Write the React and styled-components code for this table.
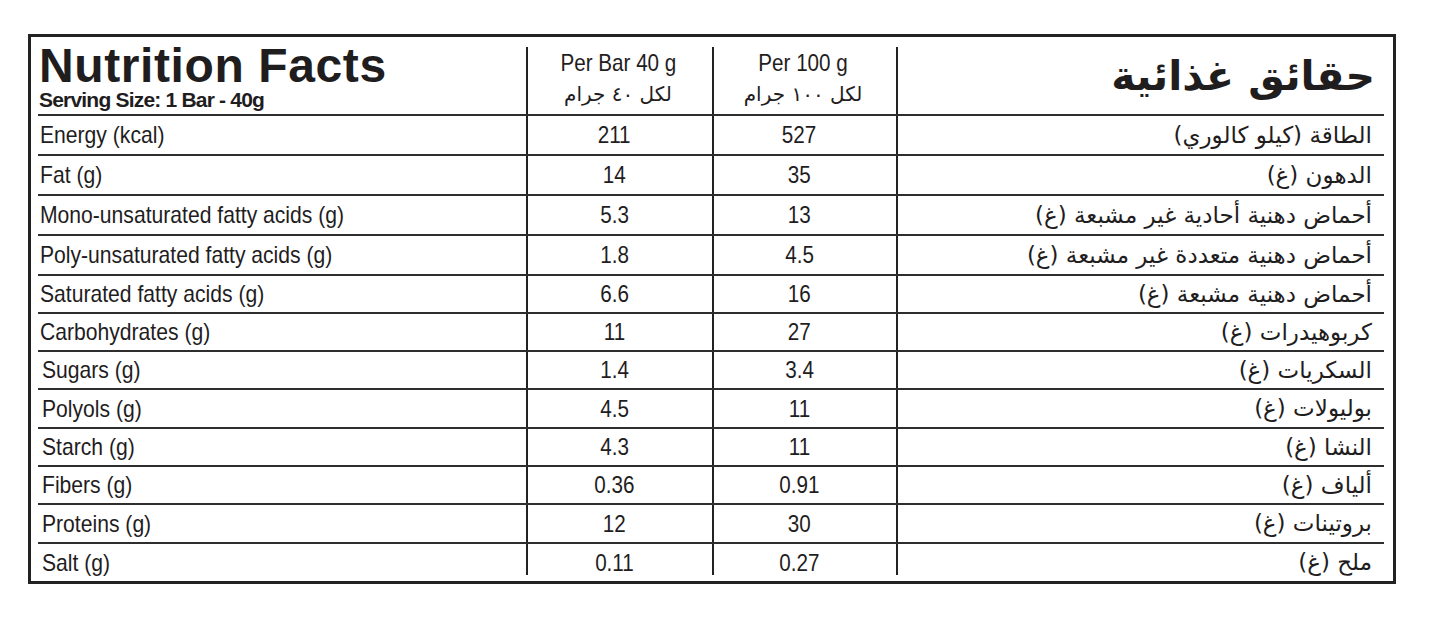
import React from 'react'
import styled, { createGlobalStyle } from 'styled-components';

const GlobalStyle = createGlobalStyle`
  body {
    margin: 0;
    background: #ffffff;
    color: #1f1d1e;
    font-family: "Liberation Sans", Arial, sans-serif;
  }
`

const Page = styled.div`
  padding: 34px 0 0 28px;
`

const Label = styled.div`
  width: 1368px;
  box-sizing: border-box;
  border: 3px solid #222;
  padding: 0 9px 0 7px;
`

const Row = styled.div`
  display: grid;
  grid-template-columns: 488px 186px 184px 1fr;
  height: ${({ $h }) => $h}px;
  border-bottom: ${({ $last }) => ($last ? 'none' : '2px solid #2e2e2e')};
`

const Cell = styled.div`
  display: flex;
  align-items: center;
  min-width: 0;
  border-left: ${({ $line }) => ($line ? '2px solid #222' : 'none')};
  margin-bottom: ${({ $last }) => ($last ? '6px' : '0')};
  padding-top: ${({ $last }) => ($last ? '6px' : '0')};
`

const LabelCell = styled(Cell)`
  padding-left: ${({ $indent }) => ($indent ? '4px' : '2px')};
`

const ValueCell = styled(Cell)`
  justify-content: center;
  padding-right: 11px;
`

/* rtl: flex-start sits on the right edge */
const ArabicCell = styled(Cell)`
  direction: rtl;
  justify-content: flex-start;
  padding-right: 12px;
`

const Narrow = styled.span`
  display: inline-block;
  font-size: 24px;
  line-height: 1;
  white-space: nowrap;
  transform: scaleX(${({ $sx }) => $sx});
  transform-origin: ${({ $origin }) => $origin};
`

const ArabicText = styled.span`
  font-family: "DejaVu Sans", sans-serif;
  font-size: ${({ $size }) => $size || 23}px;
  line-height: 1;
  white-space: nowrap;
`

const TitleBlock = styled.div`
  padding: 6px 0 0 1px;
`

const Title = styled.h1`
  margin: 0;
  font-size: 48px;
  line-height: 46px;
  font-weight: 700;
  letter-spacing: 0.6px;
`

const Serving = styled.div`
  font-size: 21px;
  line-height: 1;
  font-weight: 700;
  letter-spacing: -0.8px;
`

const HeadCell = styled.div`
  margin-top: 10px;
  border-left: 2px solid #222;
  display: flex;
  flex-direction: column;
  align-items: center;
  padding: 4px 4px 0 0;
  gap: 9px;
`

const ArabicTitleCell = styled.div`
  margin-top: 10px;
  border-left: 2px solid #222;
  display: flex;
  align-items: center;
  justify-content: flex-start;
  padding: 0 9px 8px 0;
  direction: rtl;
`

const ArabicTitle = styled.span`
  font-family: "DejaVu Sans", sans-serif;
  font-weight: 700;
  font-size: 41px;
  line-height: 1;
`

const rows = [
  { en: 'Energy (kcal)', a: '211', b: '527', ar: 'الطاقة (كيلو كالوري)', h: 38 },
  { en: 'Fat (g)', a: '14', b: '35', ar: 'الدهون (غ)', h: 38 },
  { en: 'Mono-unsaturated fatty acids (g)', a: '5.3', b: '13', ar: 'أحماض دهنية أحادية غير مشبعة (غ)', h: 38 },
  { en: 'Poly-unsaturated fatty acids (g)', a: '1.8', b: '4.5', ar: 'أحماض دهنية متعددة غير مشبعة (غ)', h: 38 },
  { en: 'Saturated fatty acids (g)', a: '6.6', b: '16', ar: 'أحماض دهنية مشبعة (غ)', h: 36 },
  { en: 'Carbohydrates (g)', a: '11', b: '27', ar: 'كربوهيدرات (غ)', h: 36 },
  { en: 'Sugars (g)', a: '1.4', b: '3.4', ar: 'السكريات (غ)', h: 36, indent: true },
  { en: 'Polyols (g)', a: '4.5', b: '11', ar: 'بوليولات (غ)', h: 37, indent: true },
  { en: 'Starch (g)', a: '4.3', b: '11', ar: 'النشا (غ)', h: 36, indent: true },
  { en: 'Fibers (g)', a: '0.36', b: '0.91', ar: 'ألياف (غ)', h: 36, indent: true },
  { en: 'Proteins (g)', a: '12', b: '30', ar: 'بروتينات (غ)', h: 37, indent: true },
  { en: 'Salt (g)', a: '0.11', b: '0.27', ar: 'ملح (غ)', h: 37, indent: true },
]

export default function App() {
  return (
    <>
      <GlobalStyle />
      <Page>
        <Label>
          <Row $h={77}>
            <TitleBlock>
              <Title>Nutrition Facts</Title>
              <Serving>Serving Size: 1 Bar - 40g</Serving>
            </TitleBlock>
            <HeadCell>
              <Narrow $sx={0.86} $origin="center">Per Bar 40 g</Narrow>
              <ArabicText dir="rtl" $size={20}>لكل ٤٠ جرام</ArabicText>
            </HeadCell>
            <HeadCell>
              <Narrow $sx={0.86} $origin="center">Per 100 g</Narrow>
              <ArabicText dir="rtl" $size={20}>لكل ١٠٠ جرام</ArabicText>
            </HeadCell>
            <ArabicTitleCell>
              <ArabicTitle>حقائق غذائية</ArabicTitle>
            </ArabicTitleCell>
          </Row>
          {rows.map((r, i) => {
            const last = i === rows.length - 1
            return (
              <Row key={r.en} $h={r.h} $last={last}>
                <LabelCell $indent={r.indent}>
                  <Narrow $sx={0.88} $origin="left">{r.en}</Narrow>
                </LabelCell>
                <ValueCell $line $last={last}>
                  <Narrow $sx={0.86} $origin="center">{r.a}</Narrow>
                </ValueCell>
                <ValueCell $line $last={last}>
                  <Narrow $sx={0.86} $origin="center">{r.b}</Narrow>
                </ValueCell>
                <ArabicCell $line $last={last}>
                  <ArabicText>{r.ar}</ArabicText>
                </ArabicCell>
              </Row>
            )
          })}
        </Label>
      </Page>
    </>
  )
}
